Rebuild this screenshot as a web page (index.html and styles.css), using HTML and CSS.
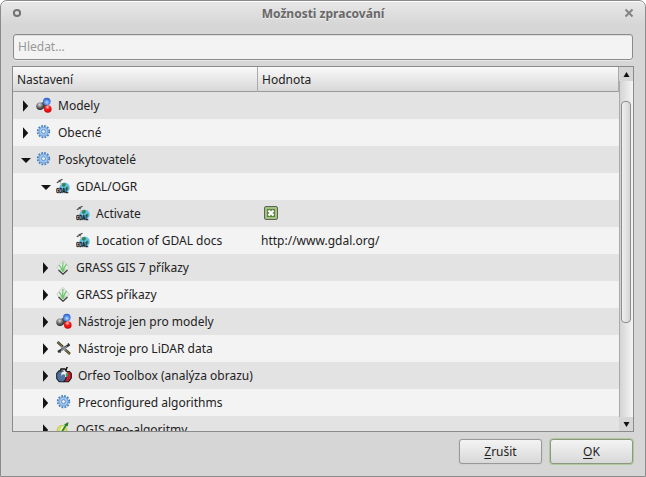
FILE: index.html
```html
<!DOCTYPE html>
<html lang="cs">
<head>
<meta charset="utf-8">
<title>Možnosti zpracování</title>
<link rel="stylesheet" href="styles.css">
</head>
<body>
<svg class="defs" width="0" height="0" aria-hidden="true">
  <defs>
    <radialGradient id="blue" cx=".5" cy=".6" r=".6"><stop offset="0" stop-color="#c5dcff"/><stop offset=".5" stop-color="#5a92f2"/><stop offset="1" stop-color="#2453bd"/></radialGradient>
    <radialGradient id="red" cx=".45" cy=".25" r=".75"><stop offset="0" stop-color="#ffd0d0"/><stop offset=".4" stop-color="#f52222"/><stop offset="1" stop-color="#d00000"/></radialGradient>
    <radialGradient id="grey" cx=".45" cy=".3" r=".7"><stop offset="0" stop-color="#e0e0e0"/><stop offset=".5" stop-color="#777"/><stop offset="1" stop-color="#262626"/></radialGradient>
    <symbol id="right" viewBox="0 0 7 12"><path d="M1 .3L6.2 6L1 11.7Z" fill="#151515"/></symbol>
    <symbol id="down" viewBox="0 0 12 6"><path d="M1 0H11L6 5Z" fill="#151515"/></symbol>
    <symbol id="model" viewBox="0 0 16 16">
      <path d="M4 8L10 4V12Z" fill="#4a4a4a" stroke="#444" stroke-width="2"/>
      <circle cx="4" cy="9.2" r="3.7" fill="url(#grey)"/><circle cx="10.8" cy="4.6" r="3.8" fill="url(#blue)"/><circle cx="11.8" cy="12" r="3.8" fill="url(#red)"/>
    </symbol>
    <symbol id="gear" viewBox="0 0 16 16">
      <circle cx="7.5" cy="7.6" r="5.7" fill="none" stroke="#4a80bd" stroke-width="2" stroke-dasharray="1.79 1.19"/>
      <circle cx="7.5" cy="7.6" r="4.5" fill="#a5c8ef" stroke="#78a7dc" stroke-width="1.3"/>
      <circle cx="7.5" cy="7.6" r="2" fill="#e9eef4" stroke="#5d91cc" stroke-width="1"/>
    </symbol>
    <symbol id="gdal" viewBox="0 0 14 16">
      <circle cx="8.6" cy="9.6" r="5.2" fill="#68bfe6"/>
      <path d="M6 5.5L9 5L10 7L8 9L6 8ZM10 9L12 8.5L12.5 11L11 13Z" fill="#278a52"/>
      <path d="M.8 4.7L3 3.4M4 2.6L6.5 1.2M2.8 2.2L4.5 4" stroke="#444" stroke-width="1.2"/><path d="M4.3 4.5L6 7" stroke="#dc9c9c"/>
      <text x="0" y="15.2" textLength="12" lengthAdjust="spacingAndGlyphs" class="mini">GDAL</text>
    </symbol>
    <symbol id="grass" viewBox="0 0 14 16">
      <path d="M7 1.3L13.3 8.3L7 15L.7 8.3Z" fill="#e9ede8" stroke="#c4c4c4" stroke-width=".8"/>
      <path d="M2.5 11L7 15.2L11.5 11" fill="none" stroke="#454545" stroke-width="1.4"/>
      <path d="M6.8 13Q5.5 9 3.3 6.2M7 13Q6.4 7 7 3M7.2 13Q8 8 10.5 5" fill="none" stroke="#6cc56c" stroke-width="1.2"/>
      <path d="M6.5 12.5L4 10.5M7.5 12.5L10 9.5" fill="none" stroke="#9bd29a" stroke-width=".9"/>
    </symbol>
    <symbol id="lidar" viewBox="0 0 16 16">
      <path d="M1.5 2L7 7M9 9.5L14 14" stroke="#3f3b25" stroke-width="2.4"/><path d="M2 12L13.5 4.5" stroke="#333" stroke-width="2.2"/>
      <path d="M2 2.5L6 6.2M10 10.5L13.7 13.8" stroke="#b4a95d" stroke-width=".8"/><path d="M5.5 6.5L10 10.5M5 10.5L11 6.2" stroke="#8f98aa" stroke-width="1.2"/>
      <path d="M12 3L13.5 5.5M2.5 10.5L4.5 13" stroke="#333"/>
    </symbol>
    <symbol id="orfeo" viewBox="0 0 16 16">
      <path d="M4 5L5 2H9L10 4L11 0H12" fill="#eee" stroke="#111" stroke-width="1.3"/>
      <path d="M10 4.5H13.5L15.3 6.5V11L12.5 14.8H8Z" fill="#d01d2b" stroke="#151515" stroke-width="1.1"/>
      <path d="M3 3.8L.7 6.5V11.5L3.2 14.8H7.5L10 12V8L7 4Z" fill="#4e719e" stroke="#18202c" stroke-width="1.1"/>
      <circle cx="8.3" cy="7.2" r="3" fill="#eee"/><circle cx="7.5" cy="9" r="1.8" fill="#4e719e"/><path d="M9.7 6L12 6.5V9.5L10 9Z" fill="#36a366"/>
    </symbol>
    <symbol id="qgis" viewBox="0 0 14 16">
      <circle cx="6" cy="9.5" r="5" fill="#d3de62" stroke="#bdca60"/>
      <path d="M4 13L7 5.5" stroke="#f6f7d8" stroke-width="2.4"/><path d="M5 12L10.5 3.5" stroke="#358a26" stroke-width="1.9"/><path d="M8 3.5L12.5 1L11.8 5.3Z" fill="#287c22"/>
    </symbol>
  </defs>
</svg>
<main class="window">
  <header class="titlebar">
    <svg class="menu" viewBox="0 0 10 10"><circle cx="5" cy="5" r="3.1"/></svg>
    <h1>Možnosti zpracování</h1>
    <svg class="close" viewBox="0 0 10 10"><path d="M1.5 1.5L8.5 8.5M8.5 1.5L1.5 8.5"/></svg>
  </header>
  <input class="search" type="text" placeholder="Hledat…" aria-label="Hledat">
  <section class="tree">
    <div class="content">
      <div class="head"><span>Nastavení</span><span>Hodnota</span></div>
      <div class="row"><div class="name"><svg class="arrow"><use href="#right"/></svg><svg class="icon"><use href="#model"/></svg>Modely</div></div>
      <div class="row"><div class="name"><svg class="arrow"><use href="#right"/></svg><svg class="icon"><use href="#gear"/></svg>Obecné</div></div>
      <div class="row"><div class="name"><svg class="arrow open"><use href="#down"/></svg><svg class="icon"><use href="#gear"/></svg>Poskytovatelé</div></div>
      <div class="row"><div class="name child"><svg class="arrow open"><use href="#down"/></svg><svg class="icon narrow"><use href="#gdal"/></svg>GDAL/OGR</div></div>
      <div class="row"><div class="name leaf"><svg class="icon narrow"><use href="#gdal"/></svg>Activate</div><div class="value"><svg class="check" viewBox="0 0 14 14"><rect x=".5" y=".5" width="13" height="13" rx="1.5"/><rect class="inner" x="3.5" y="3.5" width="7" height="7"/><path d="M4.5 4.5L9.5 9.5M9.5 4.5L4.5 9.5"/></svg></div></div>
      <div class="row"><div class="name leaf"><svg class="icon narrow"><use href="#gdal"/></svg>Location of GDAL docs</div><div class="value">http://www.gdal.org/</div></div>
      <div class="row"><div class="name child"><svg class="arrow"><use href="#right"/></svg><svg class="icon narrow"><use href="#grass"/></svg>GRASS GIS 7 příkazy</div></div>
      <div class="row"><div class="name child"><svg class="arrow"><use href="#right"/></svg><svg class="icon narrow"><use href="#grass"/></svg>GRASS příkazy</div></div>
      <div class="row"><div class="name child"><svg class="arrow"><use href="#right"/></svg><svg class="icon"><use href="#model"/></svg>Nástroje jen pro modely</div></div>
      <div class="row"><div class="name child"><svg class="arrow"><use href="#right"/></svg><svg class="icon"><use href="#lidar"/></svg>Nástroje pro LiDAR data</div></div>
      <div class="row"><div class="name child"><svg class="arrow"><use href="#right"/></svg><svg class="icon"><use href="#orfeo"/></svg>Orfeo Toolbox (analýza obrazu)</div></div>
      <div class="row"><div class="name child"><svg class="arrow"><use href="#right"/></svg><svg class="icon"><use href="#gear"/></svg>Preconfigured algorithms</div></div>
      <div class="row"><div class="name child"><svg class="arrow"><use href="#right"/></svg><svg class="icon narrow"><use href="#qgis"/></svg>QGIS geo-algoritmy</div></div>
    </div>
    <div class="scrollbar">
      <div class="step"><svg viewBox="0 0 7 5"><path d="M.5 5L3.5 0L6.5 5Z"/></svg></div>
      <div class="track"><div class="thumb"></div></div>
      <div class="step"><svg viewBox="0 0 7 5"><path d="M.5 0H6.5L3.5 5Z"/></svg></div>
    </div>
  </section>
  <footer class="actions"><button><u>Z</u>rušit</button><button class="default"><u>O</u>K</button></footer>
</main>
</body>
</html>
```
FILE: styles.css
```css
* { box-sizing: border-box; }
body { margin: 0; background: #fff; color: #222; font: 12px/17px "Noto Sans", sans-serif; }
.defs { position: absolute; }
.window { display: flex; flex-direction: column; width: 646px; height: 477px; padding: 0 12px 11px 11px; border: 1px solid #8b8b8b; border-radius: 7px 7px 0 0; background: linear-gradient(#e8e8e8, #d6d6d6 24px); box-shadow: inset 0 1px #fff; }
.titlebar { display: flex; align-items: center; height: 33px; padding-bottom: 9px; }
.titlebar h1 { flex: 1; margin: 0; text-align: center; font-size: 12px; line-height: 17px; color: #686868; text-shadow: 0 1px #eee; }
.menu, .close { width: 10px; height: 10px; fill: none; stroke: #747474; stroke-width: 2; }
.close { margin-right: -1px; stroke: #858585; }
.search { width: 620px; height: 26px; flex: none; margin-left: 1px; padding: 0 4px 1px; border: 1px solid #8b8b8b; border-radius: 3px; background: #f3f3f3; box-shadow: inset 0 1px #ddd, 0 1px #e9e9e9; font: inherit; }
.search::placeholder { color: #999; opacity: 1; }
.tree { display: flex; width: 622px; height: 366px; flex: none; margin-top: 6px; border: 1px solid #8b8b8b; overflow: hidden; }
.content { width: 606px; height: 364px; overflow: hidden; }
.head { display: grid; grid-template-columns: 245px 1fr; height: 25px; border-bottom: 1px solid #999; background: linear-gradient(#f9f9f9, #d8d8d8); }
.head span { padding: 4px; border-right: 1px solid #aaa; }
.row { display: flex; height: 27px; background: #f3f3f3; }
.row:nth-child(even) { background: #e3e3e3; }
.name { display: flex; align-items: center; width: 245px; padding-left: 9px; white-space: nowrap; }
.child { padding-left: 29px; }
.leaf { padding-left: 63px; }
.arrow { width: 7px; height: 12px; flex: none; margin: 1px 7px 0 0; }
.arrow.open { width: 12px; height: 6px; margin: 2px 4px 0 -2px; }
.icon { width: 16px; height: 16px; flex: none; margin: -1px 6px 0 0; }
.narrow { width: 14px; }
.mini { font: bold 6.5px "Liberation Sans", sans-serif; fill: #161616; stroke: #161616; stroke-width: .35; }
.value { padding: 5px 3px; }
.check { display: block; width: 14px; height: 14px; margin: 1px 3px; fill: #a0c37e; stroke: #5f635b; stroke-width: 1; }
.check .inner { fill: #6c8c52; stroke: #5f7e45; stroke-width: 1; }
.check path { stroke: #fff; stroke-width: 2.3; }
.scrollbar { display: flex; flex-direction: column; width: 14px; }
.step { display: flex; align-items: center; justify-content: center; height: 14px; background: #d6d6d6; }
.step svg { width: 7px; height: 5px; fill: #111; }
.track { flex: 1; padding: 20px 1px 0; border-left: 1px solid #aaa; background: linear-gradient(90deg, #d4d4d4, #f5f5f5); }
.thumb { width: 10px; height: 222px; border: 1px solid #8e8e8e; border-radius: 4px; background: linear-gradient(90deg, #f0f0f0, #d5d5d5); }
.actions { display: flex; justify-content: flex-end; gap: 8px; margin-top: 7px; }
.actions button { width: 83px; height: 25px; padding: 0 0 1px; border: 1px solid #999; border-radius: 3px; background: linear-gradient(#f4f4f4, #d8d8d8); box-shadow: 0 0 1px #999; color: #222; font: inherit; }
.actions .default { border-color: #8c977f; box-shadow: 0 0 0 1px #b2c99b; }
.actions u { text-underline-offset: 2px; }
```
